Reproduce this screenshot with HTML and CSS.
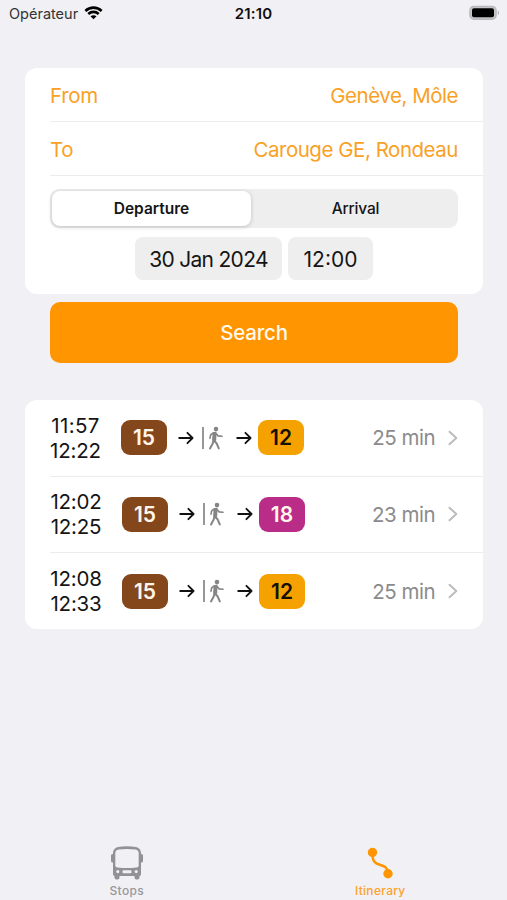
FILE: index.html
```html
<!DOCTYPE html>
<html lang="en">
<head>
<meta charset="utf-8">
<title>Itinerary</title>
<link rel="stylesheet" href="styles.css">
</head>
<body>
<svg class="defs" width="0" height="0" aria-hidden="true">
  <symbol id="arrow" viewBox="0 0 16 14"><path d="M1.2 7H14.6M9.4 1.8L14.6 7L9.4 12.2" fill="none" stroke="#111" stroke-width="1.8" stroke-linecap="round" stroke-linejoin="round"/></symbol>
  <symbol id="walk" viewBox="0 0 22 26">
    <path d="M2 2V24" stroke="#858585" stroke-width="1.7"/>
    <circle cx="15" cy="4.1" r="2.3" fill="#858585"/>
    <path d="M13.3 9L12.5 15.2L15.6 18.3L17.8 23.4M12.5 15.2L11.7 18.6L9 23.4" fill="none" stroke="#858585" stroke-width="2" stroke-linecap="round" stroke-linejoin="round"/>
    <path d="M12.3 7.7L14.8 7.5L14.5 15.3L11.9 15Z" fill="#858585" stroke="#858585" stroke-width="1.4" stroke-linejoin="round"/>
    <path d="M12 8.2L9.6 10L9 13.2M14.8 8.4L17.1 10.9L21 11.3" fill="none" stroke="#858585" stroke-width="1.6" stroke-linecap="round" stroke-linejoin="round"/>
  </symbol>
  <symbol id="chevron" viewBox="0 0 10 16"><path d="M1.5 1.7L8.3 8L1.5 14.3" fill="none" stroke="#bcbcbe" stroke-width="2" stroke-linecap="round" stroke-linejoin="round"/></symbol>
</svg>

<header class="status">
  <div class="carrier"><span>Opérateur</span>
    <svg width="19" height="14" viewBox="0 0 20 15"><path d="M1.3 5.3C6.2.6 13.8.6 18.7 5.3M4.4 8.5C7.6 5.6 12.4 5.6 15.6 8.5" fill="none" stroke="#000" stroke-width="2.8"/><path d="M10 14.2L6.8 11C8.6 9.4 11.4 9.4 13.2 11Z"/></svg>
  </div>
  <time class="clock">21:10</time>
  <svg class="battery" width="31" height="16" viewBox="0 0 31 16"><rect x=".9" y="1.4" width="26.2" height="12.8" rx="4" fill="#c4c4c6" stroke="#b9b9bb" stroke-width="1.4"/><rect x="3" y="3.3" width="22" height="9" rx="2" fill="#000"/><path d="M28.8 5.5C30.6 6.3 30.6 9.3 28.8 10.1Z" fill="#b3b3b5"/></svg>
</header>

<main>
  <section class="card form">
    <div class="field"><span class="from">From</span><span class="origin">Genève, Môle</span></div>
    <div class="field"><span class="to">To</span><span class="destination">Carouge GE, Rondeau</span></div>
    <div class="segmented"><div class="segment selected">Departure</div><div class="segment">Arrival</div></div>
    <div class="pickers"><div class="picker date">30 Jan 2024</div><div class="picker hour">12:00</div></div>
  </section>
  <button class="search">Search</button>

  <section class="card trips">
    <div class="trip">
      <div class="times"><span class="wide">11:57</span><span>12:22</span></div>
      <span class="line brown">15</span><svg class="arrow"><use href="#arrow"/></svg><svg class="walk"><use href="#walk"/></svg><svg class="arrow second"><use href="#arrow"/></svg><span class="line amber">12</span>
      <span class="duration">25 min</span><svg class="chevron"><use href="#chevron"/></svg>
    </div>
    <div class="trip shifted">
      <div class="times"><span>12:02</span><span>12:25</span></div>
      <span class="line brown">15</span><svg class="arrow"><use href="#arrow"/></svg><svg class="walk"><use href="#walk"/></svg><svg class="arrow second"><use href="#arrow"/></svg><span class="line purple">18</span>
      <span class="duration">23 min</span><svg class="chevron"><use href="#chevron"/></svg>
    </div>
    <div class="trip shifted">
      <div class="times"><span>12:08</span><span>12:33</span></div>
      <span class="line brown">15</span><svg class="arrow"><use href="#arrow"/></svg><svg class="walk"><use href="#walk"/></svg><svg class="arrow second"><use href="#arrow"/></svg><span class="line amber">12</span>
      <span class="duration">25 min</span><svg class="chevron"><use href="#chevron"/></svg>
    </div>
  </section>
</main>

<nav class="tabs">
  <div class="tab">
    <svg width="34" height="34" viewBox="0 0 34 34"><path fill="#929296" fill-rule="evenodd" d="M8 1Q17 -.5 26 1Q30.5 2 31 6.500V8H31.500Q33 8 33 9.500V15Q33 16.500 31.500 16.500H31V28Q31 30 29.500 30V31.500Q29.500 33.500 27.500 33.500H26.500Q24.500 33.500 24.500 31.500V30H9.500V31.500Q9.500 33.500 7.500 33.500H6.500Q4.500 33.500 4.500 31.500V30Q3 30 3 28V16.500H2.500Q1 16.500 1 15V9.500Q1 8 2.500 8H3V6.500Q3.500 2 8 1ZM8.500 3.500Q5.300 4 5.300 7V19.500Q5.300 21.500 7.500 21.500Q17 22.500 26.500 21.500Q28.700 21.500 28.700 19.500V7Q28.700 4 25.500 3.500Q17 2.400 8.500 3.500ZM7.800 24A1.600 1.600 0 1 0 7.800 27.200A1.600 1.600 0 1 0 7.800 24ZM26.200 24A1.600 1.600 0 1 0 26.200 27.200A1.600 1.600 0 1 0 26.200 24ZM13.500 24.300H20.500Q21.500 24.300 21.500 25.300V26.300Q21.500 27.300 20.500 27.300H13.500Q12.500 27.300 12.500 26.300V25.300Q12.500 24.300 13.500 24.300Z"/></svg>
    <span>Stops</span>
  </div>
  <div class="tab active">
    <svg width="34" height="34" viewBox="0 0 34 34"><path d="M9.5 7C8.8 25 23.500 13.500 25 27" fill="none" stroke="#ff9500" stroke-width="2.500"/><circle cx="9.500" cy="6.500" r="4.700" fill="#ff9500"/><circle cx="25" cy="27.800" r="4.700" fill="#ff9500"/></svg>
    <span>Itinerary</span>
  </div>
</nav>
</body>
</html>
```
FILE: styles.css
```css
* { box-sizing: border-box; }
body {
  margin: 0;
  width: 507px;
  height: 900px;
  overflow: hidden;
  display: flex;
  flex-direction: column;
  background: #f1f0f5;
  color: #151515;
  font: 20.5px/24px Inter, "Liberation Sans", sans-serif;
}
svg { display: block; flex: none; }
.defs { position: absolute; }
.status {
  height: 28px;
  padding: 0 7px 0 9px;
  display: grid;
  grid-template-columns: 1fr auto 1fr;
  align-items: center;
  font-size: 14.5px;
}
.carrier { display: flex; align-items: center; gap: 6px; color: #333; }
.carrier svg { margin-top: -2px; }
.clock { font-size: 15px; font-weight: 600; letter-spacing: .2px; color: #111; margin-right: 2px; }
.battery { justify-self: end; margin-top: -2px; }
main { flex: 1; padding: 40px 24px 0 25px; }
.card { background: #fff; border-radius: 12px; }
.form { height: 226px; }
.field {
  height: 54px;
  margin-left: 25px;
  padding: 2px 25px 0 0;
  display: flex;
  align-items: center;
  justify-content: space-between;
  border-bottom: 1.5px solid #ededf0;
  color: #f9a126;
  letter-spacing: -.47px;
}
.from { letter-spacing: -.3px; }
.segmented {
  height: 39px;
  margin: 13px 25px 0;
  padding: 2px;
  display: grid;
  grid-template-columns: 199px 1fr;
  background: #eee;
  border-radius: 9px;
  font-size: 15.5px;
  font-weight: 500;
}
.segment { display: flex; align-items: center; justify-content: center; border-radius: 8px; letter-spacing: -.2px; padding: 1px 0 0 4px; }
.selected { background: #fff; font-weight: 600; letter-spacing: 0; padding-left: 0; box-shadow: 0 1px 4px #0003; }
.pickers { display: flex; justify-content: center; gap: 6px; margin-top: 9px; }
.picker { height: 43px; padding-top: 2px; border-radius: 8px; background: #eee; display: flex; align-items: center; justify-content: center; font-size: 21px; }
.date { width: 147px; letter-spacing: -.7px; }
.hour { width: 85px; }
.search {
  display: block;
  width: 408px;
  height: 61px;
  margin: 8px 0 37px 25px;
  padding: 0;
  border: 0;
  border-radius: 10px;
  background: #ff9500;
  color: #fff8ec;
  font: 500 20.5px/24px Inter, "Liberation Sans", sans-serif;
  letter-spacing: -.2px;
}
.trips { height: 229px; }
.trip {
  height: 76.5px;
  margin-left: 25px;
  padding-right: 25px;
  display: flex;
  align-items: center;
  border-bottom: 1.5px solid #ededf0;
}
.trip:last-child { border-bottom: 0; }
.times { width: 51px; margin-right: 20px; display: flex; flex-direction: column; align-items: center; line-height: 25px; letter-spacing: -.2px; }
.times .wide { letter-spacing: .4px; }
.shifted .times { width: 52px; }
.line { width: 46px; height: 35px; padding-top: 1px; border-radius: 9px; color: #fff6e9; font-size: 21px; font-weight: 600; display: flex; align-items: center; justify-content: center; }
.brown { background: #84471c; }
.amber { background: #f5a200; color: #161006; }
.purple { background: #b92d88; }
.arrow { width: 16px; height: 14px; margin-left: 11px; }
.second { margin-left: 13px; margin-right: 6px; }
.walk { width: 22px; height: 26px; margin-left: 7px; }
.duration { margin-left: auto; padding-top: 1px; color: #8b8b8d; letter-spacing: -.5px; }
.chevron { width: 10px; height: 16px; margin-left: 13px; }
.tabs { height: 54px; display: grid; grid-template-columns: 1fr 1fr; }
.tab { display: flex; flex-direction: column; align-items: center; color: #97979b; font-size: 12px; font-weight: 500; line-height: 16px; letter-spacing: .3px; gap: 3px; }
.active { color: #fca22b; }
```
